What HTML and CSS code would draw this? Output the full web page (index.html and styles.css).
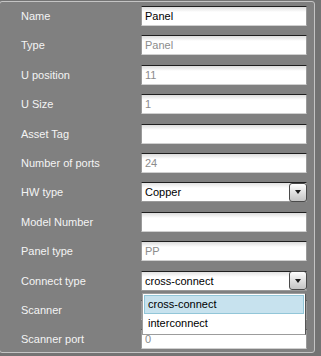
FILE: index.html
```html
<!DOCTYPE html>
<html lang="en">
<head>
  <meta charset="UTF-8" />
  <title>Panel properties</title>
  <link rel="stylesheet" href="styles.css">
</head>
<body>

<div class="panel">
  <div class="form">
    <label>Name</label>
    <div class="field"><input class="input" type="text" value="Panel"></div>

    <label>Type</label>
    <div class="field"><input class="input" type="text" value="Panel" disabled></div>

    <label>U position</label>
    <div class="field"><input class="input" type="text" value="11" disabled></div>

    <label>U Size</label>
    <div class="field"><input class="input" type="text" value="1" disabled></div>

    <label>Asset Tag</label>
    <div class="field"><input class="input" type="text" value=""></div>

    <label>Number of ports</label>
    <div class="field"><input class="input" type="text" value="24" disabled></div>

    <label>HW type</label>
    <div class="field">
      <div class="combo">
        <span class="combo-text">Copper</span>
        <span class="combo-btn"><span class="arrow"></span></span>
      </div>
    </div>

    <label>Model Number</label>
    <div class="field"><input class="input" type="text" value=""></div>

    <label>Panel type</label>
    <div class="field"><input class="input" type="text" value="PP" disabled></div>

    <label>Connect type</label>
    <div class="field">
      <div class="combo">
        <span class="combo-text">cross-connect</span>
        <span class="combo-btn"><span class="arrow"></span></span>
      </div>
      <ul class="dropdown">
        <li class="selected">cross-connect</li>
        <li>interconnect</li>
      </ul>
    </div>

    <label>Scanner</label>
    <div class="field"><input class="input" type="text" value=""></div>

    <label>Scanner port</label>
    <div class="field"><input class="input" type="text" value="0" disabled></div>
  </div>
</div>

</body>
</html>
```

FILE: styles.css
```css
body {
  margin: 0;
  background-color: #737373;
  font-family: 'Liberation Sans', Arial, sans-serif;
  font-size: 11px;
  overflow: hidden;
}

.panel {
  box-sizing: border-box;
  width: 316px;
  height: 352px;
  margin: 1px 0 0 -1px;
  border: 1px solid #c4c4c4;
  border-radius: 3px;
  background-color: #808080;
  padding: 4px 0 0 21px;
}

.form {
  display: grid;
  grid-template-columns: 120px 166px;
  grid-auto-rows: 20px;
  row-gap: 9.4px;
}

label {
  display: flex;
  align-items: center;
  color: #f4f4f4;
}

.field {
  position: relative;
}

.input {
  box-sizing: border-box;
  width: 100%;
  height: 20px;
  margin: 0;
  padding: 0 3px;
  border: 1px solid #9a9a9a;
  border-top-color: #1e1e1e;
  border-bottom-color: #d0d0d0;
  border-radius: 1px;
  background: linear-gradient(#dcdcdc, #ffffff 5px);
  font-family: inherit;
  font-size: 11px;
  color: #000;
  outline: none;
}

.input:disabled {
  color: #8c8c8c;
}

.combo {
  box-sizing: border-box;
  display: flex;
  align-items: center;
  height: 20px;
  border: 1px solid #9a9a9a;
  border-top-color: #1e1e1e;
  border-radius: 1px;
  background: linear-gradient(#e2e2e2, #ffffff 5px);
  padding-left: 3px;
}

.combo-text {
  flex: 1;
  color: #000;
}

.combo-btn {
  box-sizing: border-box;
  display: flex;
  align-items: center;
  justify-content: center;
  width: 18px;
  height: 19px;
  margin-right: -1px;
  border: 1px solid #4a4a4a;
  border-radius: 3px;
  background: linear-gradient(#ffffff, #dadada 60%, #c4c4c4);
}

.arrow {
  width: 0;
  height: 0;
  border-left: 3.5px solid transparent;
  border-right: 3.5px solid transparent;
  border-top: 4px solid #1a1a1a;
}

.dropdown {
  position: absolute;
  top: 22px;
  left: 1px;
  right: 1px;
  z-index: 5;
  list-style: none;
  margin: 0;
  padding: 1px;
  background: #fff;
  border: 1px solid #9c9c9c;
  border-right-color: #555;
  box-sizing: border-box;
}

.dropdown li {
  box-sizing: border-box;
  height: 19px;
  line-height: 17px;
  padding: 0 3px;
  border: 1px solid transparent;
  color: #000;
}

.dropdown li.selected {
  background: #c7e2ee;
  border-color: #92c6d8;
}
```
